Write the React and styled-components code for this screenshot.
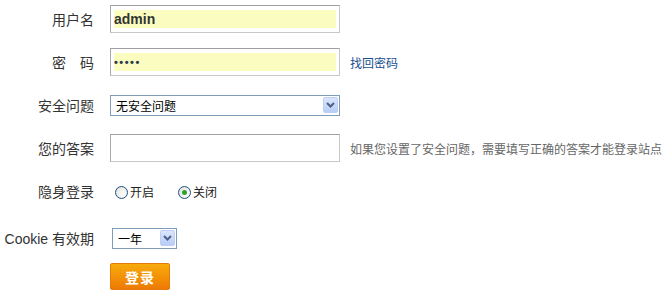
import React from 'react'
import styled, { createGlobalStyle } from 'styled-components';

const Global = createGlobalStyle`
body{
    margin:0;
    background:#fff;
    font-family:"Liberation Sans","Noto Sans CJK SC",sans-serif;
    color:#333;
}
`;

const Form = styled.div`
display:flex;
flex-direction:column;
gap:15px;
padding-top:5px;
`;

const Row = styled.div`
display:flex;
align-items:center;
gap:16px;
height:${({ h }) => h || 28}px;
margin-top:${({ mt }) => mt || 0}px;
`;

const Label = styled.div`
width:94px;
flex-shrink:0;
text-align:right;
font-size:14px;
color:#333;
white-space:nowrap;
`;

const Field = styled.div`
display:flex;
align-items:center;
gap:10px;
`;

const TextBox = styled.input`
box-sizing:border-box;
width:230px;
height:28px;
padding:4px 3px;
border:1px solid #c8c8c8;
border-top-color:#a0a0a0;
border-left-color:#a8a8a8;
background:${({ filled }) => filled ? '#fafdbf' : '#fff'};
background-clip:content-box;
outline:none;
font-family:"Liberation Sans",sans-serif;
font-size:14px;
font-weight:bold;
color:#333;
&[type=password]{
    font-size:11px;
    letter-spacing:1.5px;
    color:#2a3a4a;
}
`;

const Hint = styled.span`
font-size:12px;
color:#666;
white-space:nowrap;
`;

const Link = styled.a`
font-size:12px;
color:#1a4f8f;
text-decoration:none;
`;

const SelectBox = styled.div`
box-sizing:border-box;
width:${({ w }) => w}px;
height:21px;
border:1px solid #7f9db9;
display:flex;
align-items:center;
justify-content:space-between;
padding:0 1px 0 5px;
margin-left:${({ ml }) => ml || 0}px;
font-size:12px;
color:#000;
background:#fff;
`;

const ArrowBtn = styled.span`
width:15px;
height:16px;
box-sizing:border-box;
border:1px solid #bccff5;
border-radius:2px;
background:linear-gradient(#dbe6fd,#b7cdf7);
display:flex;
align-items:center;
justify-content:center;
`;

const Radios = styled.div`
display:flex;
align-items:center;
gap:24px;
padding-left:5px;
`;

const RadioItem = styled.label`
display:flex;
align-items:center;
gap:2px;
font-size:12px;
color:#222;
`;

const Dot = styled.span`
width:13px;
height:13px;
box-sizing:border-box;
border-radius:50%;
border:1px solid #1d5281;
background:radial-gradient(circle at 65% 65%, #fff 0, #dcdcd7 100%);
display:flex;
align-items:center;
justify-content:center;
margin-top:2px;
&::after{
    content:'';
    width:5px;
    height:5px;
    border-radius:50%;
    background:#2fa12f;
    display:${({ on }) => on ? 'block' : 'none'};
}
`;

const Button = styled.button`
width:60px;
height:27px;
margin-left:110px;
border:1px solid #e27b0b;
border-radius:2px;
background:linear-gradient(#f8ab0b,#ee7a03);
color:#fff;
font-family:"Noto Sans CJK SC",sans-serif;
font-size:14px;
font-weight:bold;
letter-spacing:1px;
padding:0;
`;

const Chevron = () => (
    <svg width="9" height="6" viewBox="0 0 9 6">
        <path d="M1 1 L4.5 4.5 L8 1" fill="none" stroke="#4d6185" strokeWidth="2" />
    </svg>
);

const Select = ({ w, ml, value }) => (
    <SelectBox w={w} ml={ml}>
        <span>{value}</span>
        <ArrowBtn><Chevron /></ArrowBtn>
    </SelectBox>
);

export default function App() {
    return (
        <>
            <Global />
            <Form>
                <Row>
                    <Label>用户名</Label>
                    <TextBox filled defaultValue="admin" />
                </Row>
                <Row>
                    <Label>密　码</Label>
                    <Field>
                        <TextBox filled type="password" defaultValue="admin" />
                        <Link href="#">找回密码</Link>
                    </Field>
                </Row>
                <Row>
                    <Label>安全问题</Label>
                    <Select w={230} value="无安全问题" />
                </Row>
                <Row>
                    <Label>您的答案</Label>
                    <Field>
                        <TextBox />
                        <Hint>如果您设置了安全问题，需要填写正确的答案才能登录站点</Hint>
                    </Field>
                </Row>
                <Row>
                    <Label>隐身登录</Label>
                    <Radios>
                        <RadioItem><Dot />开启</RadioItem>
                        <RadioItem><Dot on />关闭</RadioItem>
                    </Radios>
                </Row>
                <Row mt={4}>
                    <Label>Cookie 有效期</Label>
                    <Select w={65} ml={2} value="一年" />
                </Row>
                <Row h={27} mt={-4}>
                    <Button>登录</Button>
                </Row>
            </Form>
        </>
    )
}
